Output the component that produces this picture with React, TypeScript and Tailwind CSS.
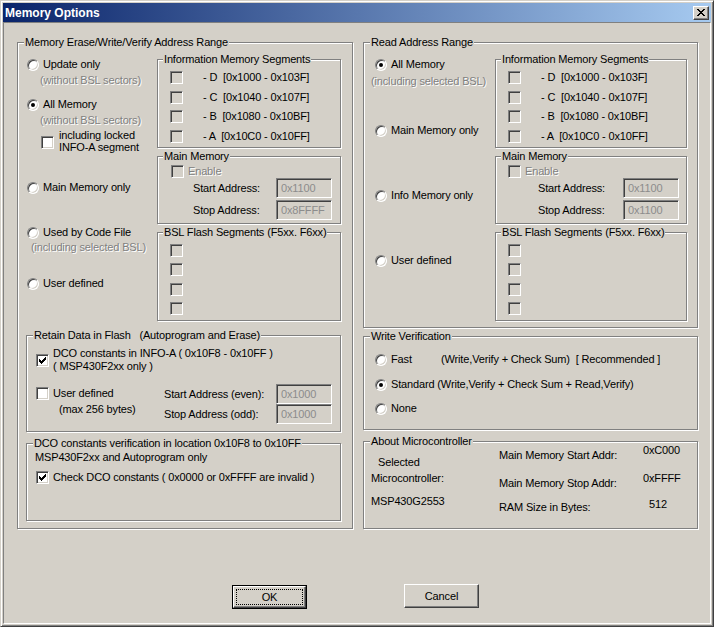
import type { ReactNode } from "react";

const dim = "text-[#808080] [text-shadow:1px_1px_0_#fff]";
const sunken =
  "border border-t-[#808080] border-l-[#808080] border-b-white border-r-white shadow-[inset_1px_1px_0_#404040,inset_-1px_-1px_0_#d4d0c8]";

function Radio({ checked = false }: { checked?: boolean }) {
  return (
    <span className={`flex h-[12px] w-[12px] shrink-0 items-center justify-center rounded-full bg-white ${sunken}`}>
      {checked && <span className="h-[4px] w-[4px] rounded-full bg-black" />}
    </span>
  );
}

function RadioRow({ label, checked, className = "" }: { label: ReactNode; checked?: boolean; className?: string }) {
  return (
    <div className={`flex items-center gap-[4px] ${className}`}>
      <Radio checked={checked} />
      <span className="whitespace-pre">{label}</span>
    </div>
  );
}

function Check({ checked = false, disabled = false }: { checked?: boolean; disabled?: boolean }) {
  return (
    <span
      className={`flex h-[13px] w-[13px] shrink-0 items-center justify-center ${sunken} ${
        disabled ? "bg-[#d4d0c8]" : "bg-white"
      }`}
    >
      {checked && (
        <svg width="7" height="7" viewBox="0 0 7 7" shapeRendering="crispEdges">
          <path
            fill={disabled ? "#808080" : "#000"}
            d="M0 2h1v3H0z M1 3h1v3H1z M2 4h1v3H2z M3 3h1v3H3z M4 2h1v3H4z M5 1h1v3H5z M6 0h1v3H6z"
          />
        </svg>
      )}
    </span>
  );
}

function Field({ value }: { value: string }) {
  return (
    <span className={`flex h-[20px] w-[56px] shrink-0 items-center bg-[#d4d0c8] pl-[4px] text-[#8c8c8c] ${sunken}`}>
      {value}
    </span>
  );
}

function Group({
  title,
  className = "",
  titleClass = "left-[6px]",
  children,
}: {
  title: string;
  className?: string;
  titleClass?: string;
  children?: ReactNode;
}) {
  return (
    <div className={`relative shrink-0 border border-[#808080] shadow-[inset_1px_1px_0_#fff,1px_1px_0_#fff] ${className}`}>
      <span className={`absolute -top-[7px] whitespace-pre bg-[#d4d0c8] px-[1px] ${titleClass}`}>{title}</span>
      {children}
    </div>
  );
}

const segs = [
  { label: "- D  [0x1000 - 0x103F]", mt: "mt-[11px]" },
  { label: "- C  [0x1040 - 0x107F]", mt: "mt-[7px]" },
  { label: "- B  [0x1080 - 0x10BF]", mt: "mt-[6px]" },
  { label: "- A  [0x10C0 - 0x10FF]", mt: "mt-[7px]" },
];

function InfoGroup({ className }: { className: string }) {
  return (
    <Group title="Information Memory Segments" titleClass="left-[5px]" className={`h-[89px] ${className}`}>
      <div className="flex flex-col pl-[12px]">
        {segs.map((s) => (
          <div key={s.label} className={`flex items-center gap-[20px] ${s.mt}`}>
            <Check disabled />
            <span className="whitespace-pre">{s.label}</span>
          </div>
        ))}
      </div>
    </Group>
  );
}

function MainGroup({
  className,
  stop,
  enableClass,
  rowClass,
  labelClass,
}: {
  className: string;
  stop: string;
  enableClass: string;
  rowClass: string;
  labelClass: string;
}) {
  return (
    <Group title="Main Memory" titleClass="left-[5px]" className={`mt-[8px] h-[68px] ${className}`}>
      <div className="flex flex-col">
        <div className={`mt-[8px] flex items-center gap-[4px] ${enableClass}`}>
          <Check disabled />
          <span className={dim}>Enable</span>
        </div>
        <div className={`flex items-center ${rowClass}`}>
          <span className={labelClass}>Start Address:</span>
          <Field value="0x1100" />
        </div>
        <div className={`mt-[2px] flex items-center ${rowClass}`}>
          <span className={labelClass}>Stop Address:</span>
          <Field value={stop} />
        </div>
      </div>
    </Group>
  );
}

function BslGroup({ className }: { className: string }) {
  return (
    <Group title="BSL Flash Segments (F5xx. F6xx)" titleClass="left-[5px]" className={`mt-[8px] h-[89px] ${className}`}>
      <div className="flex flex-col pl-[12px]">
        <span className="mt-[11px]"><Check disabled /></span>
        <span className="mt-[6px]"><Check disabled /></span>
        <span className="mt-[7px]"><Check disabled /></span>
        <span className="mt-[6px]"><Check disabled /></span>
      </div>
    </Group>
  );
}

export default function App() {
  return (
    <div className="flex h-[627px] w-[714px] flex-col border border-t-[#d4d0c8] border-l-[#d4d0c8] border-b-[#404040] border-r-[#404040] bg-[#d4d0c8] p-[2px] font-['Liberation_Sans',Arial,sans-serif] text-[11px] leading-[13px] tracking-[-0.15px] text-black shadow-[inset_1px_1px_0_#fff,inset_-1px_-1px_0_#808080]">
      {/* Title bar */}
      <div className="flex h-[19px] shrink-0 items-center justify-between bg-[linear-gradient(to_right,#0a246a,#a6caf0)] pl-[2px] pr-[2px]">
        <span className="text-[12px] font-bold leading-[14px] tracking-normal text-white">Memory Options</span>
        <span className="flex h-[14px] w-[16px] items-center justify-center border border-t-white border-l-white border-b-[#404040] border-r-[#404040] bg-[#d4d0c8] shadow-[inset_-1px_-1px_0_#808080]">
          <svg width="8" height="7" viewBox="0 0 8 7" shapeRendering="crispEdges">
            <path
              fill="#000"
              d="M0 0h2v1H0z M6 0h2v1H6z M1 1h2v1H1z M5 1h2v1H5z M2 2h4v1H2z M3 3h2v1H3z M2 4h4v1H2z M1 5h2v1H1z M5 5h2v1H5z M0 6h2v1H0z M6 6h2v1H6z"
            />
          </svg>
        </span>
      </div>

      {/* Client area */}
      <div className="flex flex-1 flex-col border border-t-[#808080] border-l-[#808080] border-b-white border-r-white">
        <div className="mt-[19px] flex gap-[10px] pl-[13px]">
          {/* Left: erase / write / verify */}
          <Group title="Memory Erase/Write/Verify Address Range" className="h-[487px] w-[336px]">
            <div className="flex flex-col">
              <div className="flex">
                <div className="flex w-[139px] flex-col pl-[9px]">
                  <RadioRow label="Update only" className="mt-[15px]" />
                  <span className={`ml-[13px] mt-[3px] ${dim}`}>(without BSL sectors)</span>
                  <RadioRow checked label="All Memory" className="mt-[11px]" />
                  <span className={`ml-[13px] mt-[3px] ${dim}`}>(without BSL sectors)</span>
                  <div className="ml-[14px] mt-[2px] flex items-start gap-[5px] leading-[12px]">
                    <span className="mt-[7px]"><Check /></span>
                    <span>
                      including locked
                      <br />
                      INFO-A segment
                    </span>
                  </div>
                  <RadioRow label="Main Memory only" className="mt-[28px]" />
                  <RadioRow label="Used by Code File" className="mt-[32px]" />
                  <span className={`ml-[4px] mt-[2px] ${dim}`}>(including selected BSL)</span>
                  <RadioRow label="User defined" className="mt-[23px]" />
                </div>
                <div className="flex w-[184px] flex-col pt-[16px]">
                  <InfoGroup className="w-[184px]" />
                  <MainGroup
                    className="w-[184px]"
                    stop="0x8FFFF"
                    enableClass="ml-[13px]"
                    rowClass="ml-[35px]"
                    labelClass="w-[83px]"
                  />
                  <BslGroup className="w-[184px]" />
                </div>
              </div>

              <Group title="Retain Data in Flash   (Autoprogram and Erase)" className="ml-[8px] mt-[14px] h-[97px] w-[315px]">
                <div className="flex flex-col">
                  <div className="ml-[9px] mt-[11px] flex items-center gap-[4px]">
                    <Check checked />
                    <span>
                      DCO constants in INFO-A ( 0x10F8 - 0x10FF )
                      <br />( MSP430F2xx only )
                    </span>
                  </div>
                  <div className="mt-[11px] flex">
                    <div className="flex w-[137px] flex-col">
                      <div className="ml-[9px] mt-[3px] flex items-center gap-[4px]">
                        <Check />
                        <span>User defined</span>
                      </div>
                      <span className="ml-[32px] mt-[3px]">(max 256 bytes)</span>
                    </div>
                    <div className="flex flex-col">
                      <div className="flex items-center">
                        <span className="w-[112px]">Start Address (even):</span>
                        <Field value="0x1000" />
                      </div>
                      <div className="flex items-center">
                        <span className="w-[112px]">Stop Address (odd):</span>
                        <Field value="0x1000" />
                      </div>
                    </div>
                  </div>
                </div>
              </Group>

              <Group
                title="DCO constants verification in location 0x10F8 to 0x10FF"
                className="ml-[8px] mt-[11px] h-[78px] w-[315px]"
              >
                <div className="flex flex-col">
                  <span className="ml-[8px] mt-[7px]">MSP430F2xx and Autoprogram only</span>
                  <div className="ml-[9px] mt-[7px] flex items-center gap-[4px]">
                    <Check checked />
                    <span>Check DCO constants ( 0x0000 or 0xFFFF are invalid )</span>
                  </div>
                </div>
              </Group>
            </div>
          </Group>

          {/* Right column */}
          <div className="flex w-[335px] flex-col">
            <Group title="Read Address Range" className="h-[286px] w-[335px]">
              <div className="flex">
                <div className="flex w-[131px] flex-col">
                  <RadioRow checked label="All Memory" className="ml-[11px] mt-[15px]" />
                  <span className={`ml-[7px] mt-[4px] ${dim}`}>(including selected BSL)</span>
                  <RadioRow label="Main Memory only" className="ml-[11px] mt-[36px]" />
                  <RadioRow label="Info Memory only" className="ml-[11px] mt-[52px]" />
                  <RadioRow label="User defined" className="ml-[11px] mt-[52px]" />
                </div>
                <div className="flex w-[192px] flex-col pt-[16px]">
                  <InfoGroup className="w-[192px]" />
                  <MainGroup
                    className="w-[192px]"
                    stop="0x1100"
                    enableClass="ml-[12px]"
                    rowClass="ml-[42px]"
                    labelClass="w-[85px]"
                  />
                  <BslGroup className="w-[192px]" />
                </div>
              </div>
            </Group>

            <Group title="Write Verification" className="mt-[8px] h-[94px] w-[335px]">
              <div className="flex flex-col pl-[11px]">
                <div className="mt-[16px] flex items-center gap-[4px]">
                  <Radio />
                  <span className="w-[46px]">Fast</span>
                  <span className="whitespace-pre">(Write,Verify + Check Sum)  [ Recommended ]</span>
                </div>
                <RadioRow checked label="Standard (Write,Verify + Check Sum + Read,Verify)" className="mt-[12px]" />
                <RadioRow label="None" className="mt-[11px]" />
              </div>
            </Group>

            <Group title="About Microcontroller" className="mt-[11px] h-[88px] w-[335px]">
              <div className="flex pl-[7px]">
                <div className="flex w-[128px] flex-col">
                  <span className="ml-[7px] mt-[14px]">Selected</span>
                  <span className="mt-[3px]">Microcontroller:</span>
                  <span className="mt-[10px]">MSP430G2553</span>
                </div>
                <div className="flex w-[144px] flex-col">
                  <span className="mt-[7px]">Main Memory Start Addr:</span>
                  <span className="mt-[15px]">Main Memory Stop Addr:</span>
                  <span className="mt-[11px]">RAM Size in Bytes:</span>
                </div>
                <div className="flex flex-col">
                  <span className="mt-[2px]">0xC000</span>
                  <span className="mt-[15px]">0xFFFF</span>
                  <span className="ml-[6px] mt-[13px]">512</span>
                </div>
              </div>
            </Group>
          </div>
        </div>

        {/* Buttons */}
        <div className="mt-[55px] flex items-start gap-[97px] pl-[228px]">
          <div className="mt-[1px] flex h-[24px] w-[75px] border border-black">
            <div className="flex flex-1 border border-t-white border-l-white border-b-[#404040] border-r-[#404040] shadow-[inset_-1px_-1px_0_#808080]">
              <span className="m-[2px] flex flex-1 items-center justify-center border border-dotted border-black">OK</span>
            </div>
          </div>
          <div className="flex h-[24px] w-[75px] items-center justify-center border border-t-white border-l-white border-b-[#404040] border-r-[#404040] shadow-[inset_-1px_-1px_0_#808080]">
            Cancel
          </div>
        </div>
      </div>
    </div>
  );
}
